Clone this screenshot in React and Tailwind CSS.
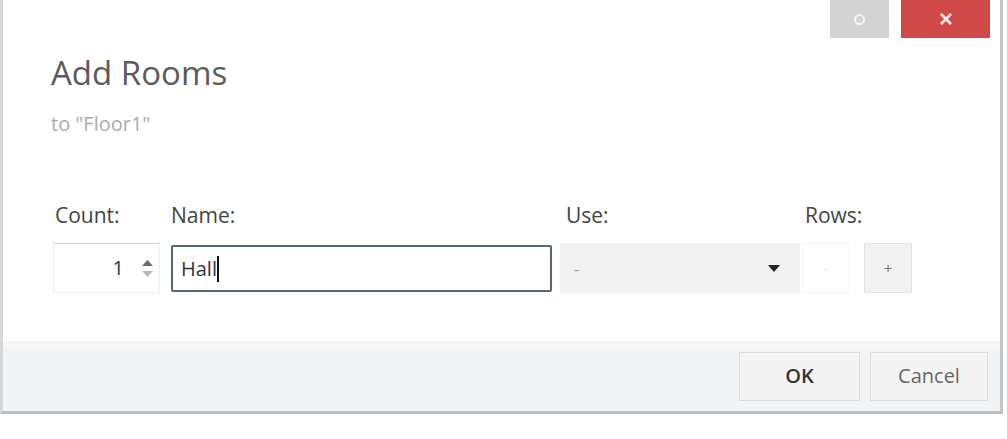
import { useState } from 'react';

export default function App() {
    const [count, setCount] = useState(1);
    const name = 'Hall';

    return (
        <div className="w-[1007px] h-[439px] bg-white" style={{ fontFamily: '"Open Sans", "Noto Sans", sans-serif' }}>
            <div className="w-[1003px] h-[414px] flex flex-col border-l-[3px] border-r-[3px] border-b-[3px] border-l-[#d6d6d6] border-r-[#c4c4c4] border-b-[#bdbdbd] bg-white">
                {/* window buttons */}
                <div className="flex justify-end gap-[12px] pr-[10px]">
                    <button className="w-[59px] h-[38px] bg-[#d3d3d3] flex items-center justify-center">
                        <span className="w-[11px] h-[11px] rounded-full border-[2px] border-[#f4f4f4]" />
                    </button>
                    <button className="w-[89px] h-[38px] bg-[#d04848] flex items-center justify-center">
                        <svg width="14" height="14" viewBox="0 0 14 14">
                            <path d="M2 2 L12 12 M12 2 L2 12" stroke="#fbeaea" strokeWidth="2.6" />
                        </svg>
                    </button>
                </div>

                <div className="pl-[48px] pt-[13px]">
                    <h1 className="text-[33px] leading-[44px] text-[#5b5b5b]">Add Rooms</h1>
                    <p className="mt-[16px] text-[20px] leading-[26px] text-[#ababab]">to "Floor1"</p>
                </div>

                {/* fields */}
                <div className="flex pl-[50px] pt-[64px]">
                    <div className="flex flex-col w-[107px]">
                        <label className="text-[21px] leading-[28px] text-[#444] pl-[2px]">Count:</label>
                        <div className="mt-[14px] h-[50px] flex items-center border border-[#ececec] border-t-[#d0d0d0]">
                            <span className="flex-1 text-right text-[20px] text-[#333] pr-[18px]">{count}</span>
                            <div className="flex flex-col items-center mr-[6px] gap-[5px]">
                                <svg width="11" height="6" viewBox="0 0 11 6" onClick={() => setCount(count + 1)}>
                                    <path d="M5.5 0 L11 6 L0 6 Z" fill="#6a6a6a" />
                                </svg>
                                <svg width="11" height="6" viewBox="0 0 11 6" onClick={() => setCount(Math.max(1, count - 1))}>
                                    <path d="M0 0 L11 0 L5.5 6 Z" fill="#b8b8b8" />
                                </svg>
                            </div>
                        </div>
                    </div>
                    <div className="flex flex-col w-[381px] ml-[11px]">
                        <label className="text-[21px] leading-[28px] text-[#444]">Name:</label>
                        <div className="mt-[16px] h-[47px] border-2 border-[#55677e] rounded-[2px] px-[8px] flex items-center text-[20px] text-[#333]">
                            <span>{name}</span>
                            <span className="w-[2px] h-[26px] bg-[#111]" />
                        </div>
                    </div>
                    <div className="flex flex-col w-[240px] ml-[8px]">
                        <label className="text-[21px] leading-[28px] text-[#444] pl-[6px]">Use:</label>
                        <div className="mt-[14px] h-[51px] bg-[#f1f1f1] flex items-center justify-between pl-[14px] pr-[20px]">
                            <span className="text-[16px] text-[#999]">-</span>
                            <svg width="12" height="7" viewBox="0 0 12 7">
                                <path d="M0 0 L12 0 L6 7 Z" fill="#222" />
                            </svg>
                        </div>
                    </div>
                    <div className="flex flex-col ml-[3px]">
                        <label className="text-[21px] leading-[28px] text-[#444] pl-[2px]">Rows:</label>
                        <div className="mt-[14px] flex gap-[14px]">
                            <button className="w-[47px] h-[50px] border border-[#f6f6f6] text-[#ddd] text-[14px]">-</button>
                            <button className="w-[48px] h-[50px] bg-[#f2f2f2] border border-[#e2e2e2] text-[#777] text-[15px]">+</button>
                        </div>
                    </div>
                </div>

                {/* footer */}
                <div className="mt-auto h-[70px] border-t-[6px] border-[#f7f7f7] bg-[#f1f4f6] flex items-center justify-end gap-[10px] pr-[12px] pb-[6px]">
                    <button className="w-[121px] h-[49px] border border-[#dcdcdc] bg-[#f4f4f4] text-[20px] font-semibold text-[#333]">OK</button>
                    <button className="w-[118px] h-[49px] border border-[#dcdcdc] bg-[#f4f4f4] text-[20px] text-[#666]">Cancel</button>
                </div>
            </div>
        </div>
    );
}
